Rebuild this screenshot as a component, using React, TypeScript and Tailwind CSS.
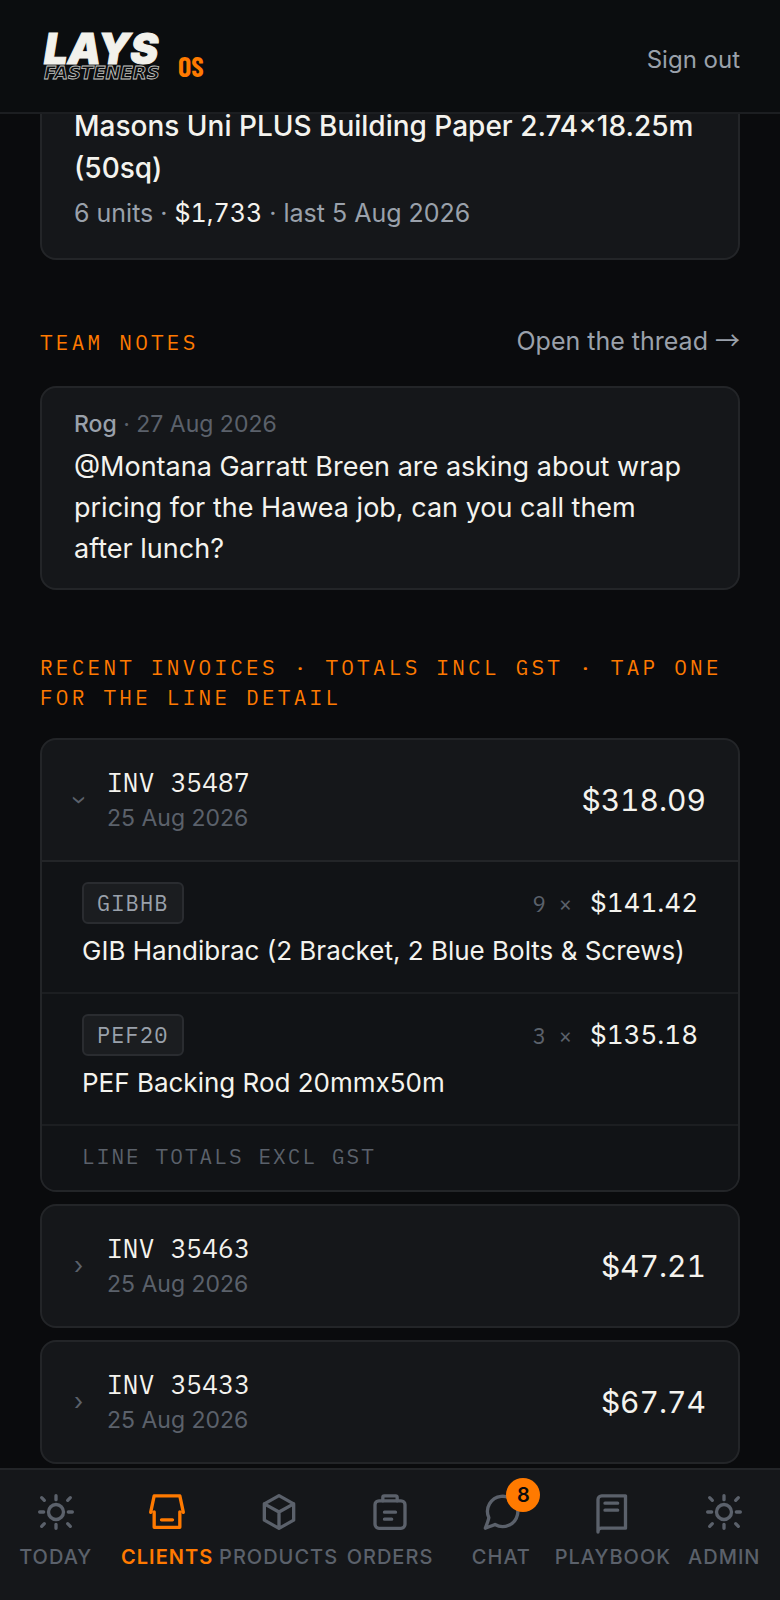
import React, { useState } from 'react'

interface InvoiceLine {
  code: string
  qty: number
  total: string
  description: string
}

interface Invoice {
  id: string
  date: string
  total: string
  lines: InvoiceLine[]
}

const invoices: Invoice[] = [
  {
    id: 'INV 35487',
    date: '25 Aug 2026',
    total: '$318.09',
    lines: [
      { code: 'GIBHB', qty: 9, total: '$141.42', description: 'GIB Handibrac (2 Bracket, 2 Blue Bolts & Screws)' },
      { code: 'PEF20', qty: 3, total: '$135.18', description: 'PEF Backing Rod 20mmx50m' }
    ]
  },
  { id: 'INV 35463', date: '25 Aug 2026', total: '$47.21', lines: [] },
  { id: 'INV 35433', date: '25 Aug 2026', total: '$67.74', lines: [] }
]

const sun = (
  <>
    <circle cx="12" cy="12" r="4.5" />
    <path d="M12 2.2v2.4M12 19.4v2.4M2.2 12h2.4M19.4 12h2.4M3.4 3.4 5 5M19 19l1.6 1.6M3.4 20.6 5 19M19 5l1.6-1.6" />
  </>
)

const navItems = [
  { label: 'TODAY', icon: sun },
  {
    label: 'CLIENTS',
    active: true,
    icon: <path d="M2.2 12.2 4.3 2.3h15.4l2.1 9.9M4.3 11.9v9.3h15.4v-9.3M8.7 16.7h6.6" />
  },
  {
    label: 'PRODUCTS',
    icon: <path d="M12 2.2l8.8 4.9v9.8L12 21.8l-8.8-4.9V7.1zM3.2 7.1 12 12l8.8-4.9M12 12v9.8" />
  },
  {
    label: 'ORDERS',
    icon: (
      <>
        <rect x="3" y="5.3" width="18" height="16.5" rx="2.4" />
        <path d="M7.7 5.3V3.1a.8.8 0 0 1 .8-.8h7a.8.8 0 0 1 .8.8v2.2M8.7 12.1h6.6M8.7 16.3h4.3" />
      </>
    )
  },
  {
    label: 'CHAT',
    badge: 8,
    icon: <path d="M4.7 15.4A9.1 9.1 0 1 1 8.4 19.5Q7.6 19.9 2.6 21.7Q4.6 16.6 4.7 15.4z" />
  },
  {
    label: 'PLAYBOOK',
    icon: <path d="M3 24V4.5a2.2 2.2 0 0 1 2.2-2.2h14.3v19.4H5A2 2 0 0 0 3 23.7M7.2 6.7h7.6M7.2 10.9h7.6" />
  },
  { label: 'ADMIN', icon: sun }
]

const Logo: React.FC = () => (
  <svg viewBox="0 0 124 48" className="h-12 w-[124px] overflow-visible" role="img" aria-label="Lays Fasteners">
    <text x="4" y="32" fontFamily="Inter, sans-serif" fontSize="42" fontWeight="900" fontStyle="italic" fill="#f2f1ec" stroke="#f2f1ec" strokeWidth="1">
      LAYS
    </text>
    <text x="4" y="47" fontFamily="'DejaVu Sans', sans-serif" fontSize="18" fontWeight="700" fontStyle="italic" fill="none" stroke="#c9c8c4" strokeWidth="0.8">
      FASTENERS
    </text>
  </svg>
)

const InvoiceCard: React.FC<{ invoice: Invoice; defaultOpen?: boolean }> = ({ invoice, defaultOpen = false }) => {
  const [isOpen, setIsOpen] = useState(defaultOpen)

  return (
    <li className="overflow-hidden rounded-2xl border-2 border-[#232528] bg-[#15171a]">
      <button onClick={() => setIsOpen(!isOpen)} aria-expanded={isOpen} className="flex h-[120px] w-full items-center px-8 text-left">
        <span className={isOpen ? 'w-[9px] rotate-90 text-2xl text-[#5b616b]' : 'w-[9px] text-2xl text-[#5b616b]'}>›</span>
        <span className="ml-6 flex flex-1 flex-col">
          <span className="font-['IBM_Plex_Mono','Liberation_Mono',monospace] text-[26px] leading-[34px] tracking-[0.01em]">{invoice.id}</span>
          <span className="pt-0.5 text-[23px] leading-[35px] text-[#5b616b]">{invoice.date}</span>
        </span>
        <span className="text-[30px] tabular-nums">{invoice.total}</span>
      </button>

      {isOpen && (
        <div className="border-t-2 border-[#232528] bg-[#111316]">
          {invoice.lines.map((line) => (
            <div key={line.code} className="border-b-2 border-[#1c1e21] px-10 pt-5 pb-[22px]">
              <div className="flex items-center justify-between">
                <span className="rounded-md border-2 border-[#2a2c30] bg-[#1b1d20] px-[13px] font-['IBM_Plex_Mono','Liberation_Mono',monospace] text-[22px] leading-[38px] tracking-[0.05em] text-[#9aa1ab]">
                  {line.code}
                </span>
                <span className="flex items-baseline gap-[18px]">
                  <span className="font-['IBM_Plex_Mono','Liberation_Mono',monospace] text-[22px] text-[#5b616b]">{line.qty} ×</span>
                  <span className="text-[26px] leading-10 tabular-nums">{line.total}</span>
                </span>
              </div>
              <p className="mt-2 text-[26px] leading-[38px]">{line.description}</p>
            </div>
          ))}
          <p className="px-10 pt-3.5 pb-[18px] font-['IBM_Plex_Mono','Liberation_Mono',monospace] text-[21px] leading-8 tracking-[0.1em] text-[#5b616b]">
            LINE TOTALS EXCL GST
          </p>
        </div>
      )}
    </li>
  )
}

export default function App() {
  return (
    <div className="min-h-screen bg-[#0a0b0d] font-['Inter',sans-serif] text-[#f4f3ee]">
      <header className="fixed inset-x-0 top-0 z-10 flex h-[114px] items-center justify-between border-b-2 border-[#1c1e21] bg-[#0b0d0f] px-10">
        <a href="#today" className="flex items-end gap-3.5">
          <Logo />
          <span className="font-['Barlow_Condensed','Liberation_Sans_Narrow','Liberation_Sans',sans-serif] text-[28px] leading-7 font-bold text-[#ff7a00]">OS</span>
        </a>
        <button className="pt-2 text-2xl leading-9 text-[#9aa1ab]">Sign out</button>
      </header>

      <main className="px-10 pt-[71px] pb-32">
        <section className="rounded-2xl border-2 border-[#232528] bg-[#15171a] px-8 pt-8 pb-[26px]">
          <h3 className="text-[28px] leading-[42px] font-medium">Masons Uni PLUS Building Paper 2.74×18.25m (50sq)</h3>
          <p className="mt-[5px] text-[25px] leading-[38px] text-[#9aa1ab]">
            6 units · <span className="text-[#f4f3ee] tabular-nums">$1,733</span> · last 5 Aug 2026
          </p>
        </section>

        <section className="mt-[62px]">
          <div className="flex items-baseline justify-between">
            <h2 className="font-['IBM_Plex_Mono','Liberation_Mono',monospace] text-[21px] leading-[30px] tracking-[0.155em] text-[#ff7a00]">TEAM NOTES</h2>
            <a href="#thread" className="text-[25px] leading-[38px] text-[#9aa1ab]">
              Open the thread <span className="font-['Noto_Sans_CJK_JP',sans-serif] leading-none">→</span>
            </a>
          </div>
          <article className="mt-[26px] rounded-2xl border-2 border-[#232528] bg-[#15171a] px-8 pt-5 pb-[19px]">
            <p className="text-[23px] leading-[33px] text-[#5b616b]">
              <span className="font-medium text-[#9aa1ab]">Rog</span> · 27 Aug 2026
            </p>
            <p className="mt-[5px] pr-4 text-[27px] leading-[41px]">
              @Montana Garratt Breen are asking about wrap pricing for the Hawea job, can you call them after lunch?
            </p>
          </article>
        </section>

        <section className="mt-[62px]">
          <h2 className="font-['IBM_Plex_Mono','Liberation_Mono',monospace] text-[21px] leading-[30px] tracking-[0.155em] text-[#ff7a00]">
            RECENT INVOICES · TOTALS INCL GST · TAP ONE FOR THE LINE DETAIL
          </h2>
          <ul className="mt-[26px] flex flex-col gap-3">
            {invoices.map((invoice, index) => (
              <InvoiceCard key={invoice.id} invoice={invoice} defaultOpen={index === 0} />
            ))}
          </ul>
        </section>
      </main>

      <nav className="fixed inset-x-0 bottom-0 z-10 flex border-t-2 border-[#232528] bg-[#15171a] pt-[22px] pb-[27px]">
        {navItems.map((item) => (
          <a
            key={item.label}
            href={`#${item.label.toLowerCase()}`}
            className={
              item.active
                ? 'flex min-w-0 flex-1 flex-col items-center gap-[9px] font-semibold text-[#ff7a00]'
                : 'flex min-w-0 flex-1 flex-col items-center gap-[9px] font-medium text-[#5b616b]'
            }
          >
            <span className="relative">
              <svg viewBox="0 0 24 24" className="size-10 overflow-visible" fill="none" stroke="currentColor" strokeWidth="2" strokeLinecap="round" strokeLinejoin="round">
                {item.icon}
              </svg>
              {item.badge && (
                <span className="absolute -top-3.5 -right-[19px] flex size-[34px] items-center justify-center rounded-full bg-[#ff7a00] text-[20px] font-semibold text-[#0a0b0d]">
                  {item.badge}
                </span>
              )}
            </span>
            <span className="text-[20px] leading-8 tracking-[0.05em] whitespace-nowrap">{item.label}</span>
          </a>
        ))}
      </nav>
    </div>
  )
}
